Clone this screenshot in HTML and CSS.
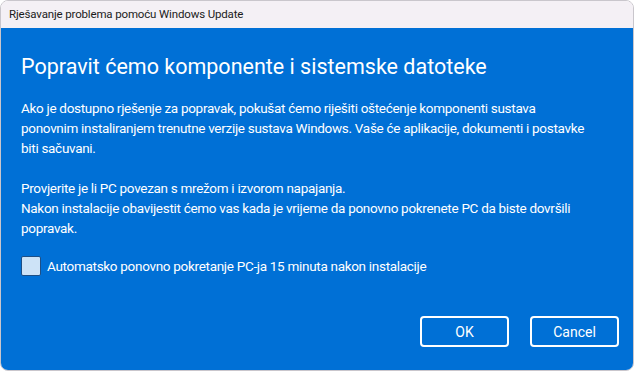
FILE: index.html
```html
<!DOCTYPE html>
<html lang="hr">
<head>
<meta charset="utf-8">
<title>Rješavanje problema pomoću Windows Update</title>
<link rel="stylesheet" href="styles.css">
</head>
<body>
<div class="window">
  <div class="titlebar">Rješavanje problema pomoću Windows Update</div>
  <div class="content">
    <h1 class="heading">Popravit ćemo komponente i sistemske datoteke</h1>
    <p class="text">Ako je dostupno rješenje za popravak, pokušat ćemo riješiti oštećenje komponenti sustava<br>ponovnim instaliranjem trenutne verzije sustava Windows. Vaše će aplikacije, dokumenti i postavke<br>biti sačuvani.</p>
    <p class="text">Provjerite je li PC povezan s mrežom i izvorom napajanja.<br>Nakon instalacije obavijestit ćemo vas kada je vrijeme da ponovno pokrenete PC da biste dovršili<br>popravak.</p>
    <label class="check">
      <span class="box"></span>
      <span class="check-label">Automatsko ponovno pokretanje PC-ja 15 minuta nakon instalacije</span>
    </label>
    <div class="actions">
      <button class="btn">OK</button>
      <button class="btn">Cancel</button>
    </div>
  </div>
</div>
</body>
</html>
```
FILE: styles.css
```css
html, body {
  margin: 0;
  padding: 0;
  background: #ffffff;
}
body {
  font-family: Roboto, "Noto Sans", sans-serif;
}
.window {
  box-sizing: border-box;
  width: 634px;
  height: 371px;
  border: 1px solid #c9c6cc;
  border-radius: 8px;
  overflow: hidden;
  display: flex;
  flex-direction: column;
}
.titlebar {
  height: 27px;
  flex: none;
  background: #f4f0f5;
  color: #1b1b1b;
  font-size: 11.5px;
  letter-spacing: -0.15px;
  line-height: 27px;
  padding-left: 8px;
  white-space: nowrap;
}
.content {
  flex: 1;
  background: #0070d6;
  color: #ffffff;
  padding: 0 14px 0 20px;
  display: flex;
  flex-direction: column;
  white-space: nowrap;
}
.heading {
  margin: 24px 0 0;
  font-size: 21.5px;
  font-weight: 400;
  line-height: 30px;
}
.text {
  margin: 16px 0 0;
  font-size: 13.5px;
  letter-spacing: -0.3px;
  line-height: 20px;
}
.text + .text {
  margin-top: 20px;
}
.check {
  display: flex;
  align-items: center;
  gap: 6px;
  margin-top: 18px;
}
.box {
  box-sizing: border-box;
  width: 20px;
  height: 20px;
  background: #cde3f7;
  border: 1px solid #1d4f86;
  border-radius: 2px;
}
.check-label {
  font-size: 13.5px;
  letter-spacing: -0.3px;
  line-height: 20px;
}
.actions {
  margin-top: auto;
  margin-bottom: 23px;
  display: flex;
  justify-content: flex-end;
  gap: 21px;
}
.btn {
  box-sizing: border-box;
  width: 89px;
  height: 31px;
  background: transparent;
  border: 2px solid #ffffff;
  border-radius: 4px;
  color: #ffffff;
  font-family: inherit;
  font-size: 14px;
}
```
